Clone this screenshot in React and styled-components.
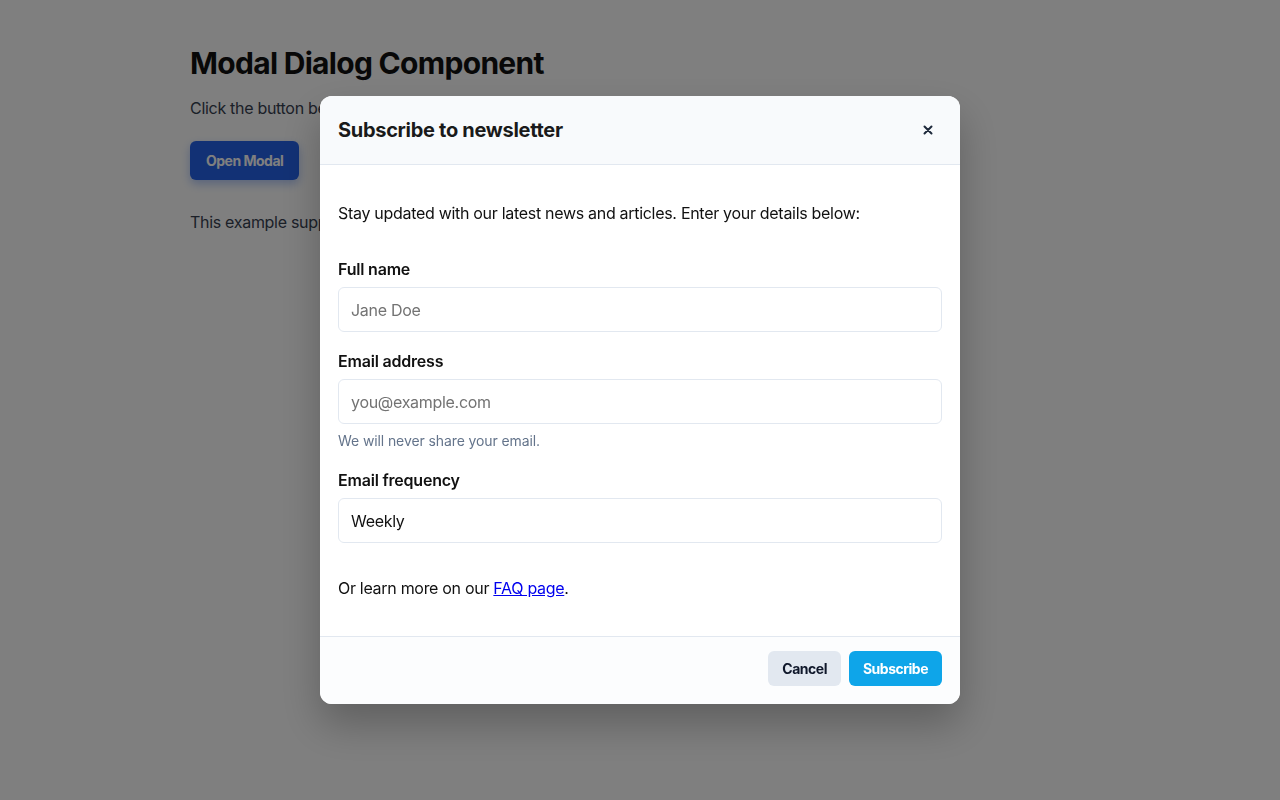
import React, { useState } from 'react';
import styled, { createGlobalStyle } from 'styled-components';

const GlobalStyle = createGlobalStyle`
  * { box-sizing: border-box; }
  html, body {
    margin: 0;
    padding: 0;
    background: #ffffff;
    font-family: Inter, "Noto Sans", sans-serif;
    color: #111827;
  }
`;

const Page = styled.main`
  max-width: 900px;
  margin: 0 auto;
  padding: 44px 0 0;
  min-height: 800px;
`;

const PageTitle = styled.h1`
  margin: 0 0 14px;
  font-size: 30px;
  line-height: 38px;
  font-weight: 700;
  letter-spacing: -0.7px;
  color: #111111;
`;

const PageText = styled.p`
  margin: 0;
  font-size: 16px;
  line-height: 24px;
  letter-spacing: -0.3px;
  color: #374151;
`;

const OpenButton = styled.button`
  margin: 21px 0 30px;
  height: 39px;
  padding: 0 16px;
  border: none;
  border-radius: 6px;
  background: #2563eb;
  color: #ffffff;
  font-family: inherit;
  font-size: 14px;
  font-weight: 700;
  letter-spacing: -0.5px;
  box-shadow: 0 4px 10px rgba(37, 99, 235, 0.35);
  cursor: pointer;
`;

const Overlay = styled.div`
  position: fixed;
  inset: 0;
  background: rgba(0, 0, 0, 0.5);
  display: flex;
  justify-content: center;
  align-items: flex-start;
  padding-top: 96px;
`;

const Dialog = styled.div`
  width: 640px;
  background: #ffffff;
  border-radius: 12px;
  overflow: hidden;
  box-shadow: 0 20px 40px rgba(0, 0, 0, 0.25);
`;

const Header = styled.header`
  display: flex;
  align-items: center;
  justify-content: space-between;
  height: 69px;
  padding: 0 18px;
  background: #f8fafc;
  border-bottom: 1px solid #e2e8f0;
`;

const DialogTitle = styled.h2`
  margin: 0;
  font-size: 20px;
  line-height: 28px;
  font-weight: 700;
  letter-spacing: -0.3px;
  color: #1a1a1a;
`;

const CloseButton = styled.button`
  width: 24px;
  height: 24px;
  display: flex;
  align-items: center;
  justify-content: center;
  margin-right: 2px;
  padding: 0;
  border: none;
  background: transparent;
  color: #1e293b;
  cursor: pointer;
`;

const Body = styled.div`
  padding: 36px 18px 36px;
`;

const Intro = styled.p`
  margin: 0 0 32px;
  font-size: 16px;
  line-height: 24px;
  letter-spacing: -0.3px;
  color: #111111;
`;

const Fields = styled.div`
  display: flex;
  flex-direction: column;
  gap: 17px;
`;

const Field = styled.div`
  display: flex;
  flex-direction: column;
`;

const Label = styled.label`
  font-size: 16px;
  line-height: 24px;
  font-weight: 600;
  letter-spacing: -0.2px;
  color: #111111;
  margin-bottom: 6px;
`;

const Input = styled.input`
  height: 45px;
  padding: 0 12px;
  border: 1px solid #e2e8f0;
  border-radius: 6px;
  font-family: inherit;
  font-size: 16px;
  letter-spacing: -0.3px;
  color: #111111;
  background: #ffffff;
  outline: none;

  &::placeholder {
    color: #737373;
  }
`;

const Select = styled.select`
  height: 45px;
  padding: 0 12px;
  border: 1px solid #e2e8f0;
  border-radius: 6px;
  font-family: inherit;
  font-size: 16px;
  letter-spacing: -0.3px;
  color: #111111;
  background: #ffffff;
  appearance: none;
  outline: none;
`;

const Help = styled.small`
  margin-top: 7px;
  font-size: 14px;
  line-height: 20px;
  letter-spacing: -0.1px;
  color: #64748b;
`;

const Note = styled.p`
  margin: 33px 0 0;
  font-size: 16px;
  line-height: 24px;
  letter-spacing: -0.3px;
  color: #111111;

  a {
    color: #0000ee;
  }
`;

const Footer = styled.footer`
  display: flex;
  justify-content: flex-end;
  gap: 8px;
  padding: 14px 18px 18px;
  background: #fcfdfe;
  border-top: 1px solid #e2e8f0;
`;

const ActionButton = styled.button`
  height: 35px;
  padding: 0 14px;
  border: none;
  border-radius: 6px;
  font-family: inherit;
  font-size: 14px;
  font-weight: 700;
  letter-spacing: -0.5px;
  cursor: pointer;
  background: ${({ $primary }) => ($primary ? '#0ea5e9' : '#e2e8f0')};
  color: ${({ $primary }) => ($primary ? '#ffffff' : '#0f172a')};
`;

export default function App() {
  const [open, setOpen] = useState(true);

  return (
    <>
      <GlobalStyle />
      <Page>
        <PageTitle>Modal Dialog Component</PageTitle>
        <PageText>Click the button below to open the modal dialog.</PageText>
        <OpenButton onClick={() => setOpen(true)}>Open Modal</OpenButton>
        <PageText>
          This example supports keyboard navigation, focus trapping and closing with Escape.
        </PageText>
      </Page>

      {open && (
        <Overlay>
          <Dialog role="dialog" aria-modal="true">
            <Header>
              <DialogTitle>Subscribe to newsletter</DialogTitle>
              <CloseButton aria-label="Close" onClick={() => setOpen(false)}>
                <svg width="10" height="10" viewBox="0 0 10 10">
                  <path d="M1.5 1.5 L8.5 8.5 M8.5 1.5 L1.5 8.5" stroke="currentColor" strokeWidth="2" strokeLinecap="round" />
                </svg>
              </CloseButton>
            </Header>
            <Body>
              <Intro>Stay updated with our latest news and articles. Enter your details below:</Intro>
              <Fields>
                <Field>
                  <Label htmlFor="name">Full name</Label>
                  <Input id="name" placeholder="Jane Doe" />
                </Field>
                <Field>
                  <Label htmlFor="email">Email address</Label>
                  <Input id="email" type="email" placeholder="you@example.com" />
                  <Help>We will never share your email.</Help>
                </Field>
                <Field>
                  <Label htmlFor="freq">Email frequency</Label>
                  <Select id="freq" defaultValue="weekly">
                    <option value="daily">Daily</option>
                    <option value="weekly">Weekly</option>
                    <option value="monthly">Monthly</option>
                  </Select>
                </Field>
              </Fields>
              <Note>
                Or learn more on our <a href="#faq">FAQ page</a>.
              </Note>
            </Body>
            <Footer>
              <ActionButton onClick={() => setOpen(false)}>Cancel</ActionButton>
              <ActionButton $primary>Subscribe</ActionButton>
            </Footer>
          </Dialog>
        </Overlay>
      )}
    </>
  );
}
